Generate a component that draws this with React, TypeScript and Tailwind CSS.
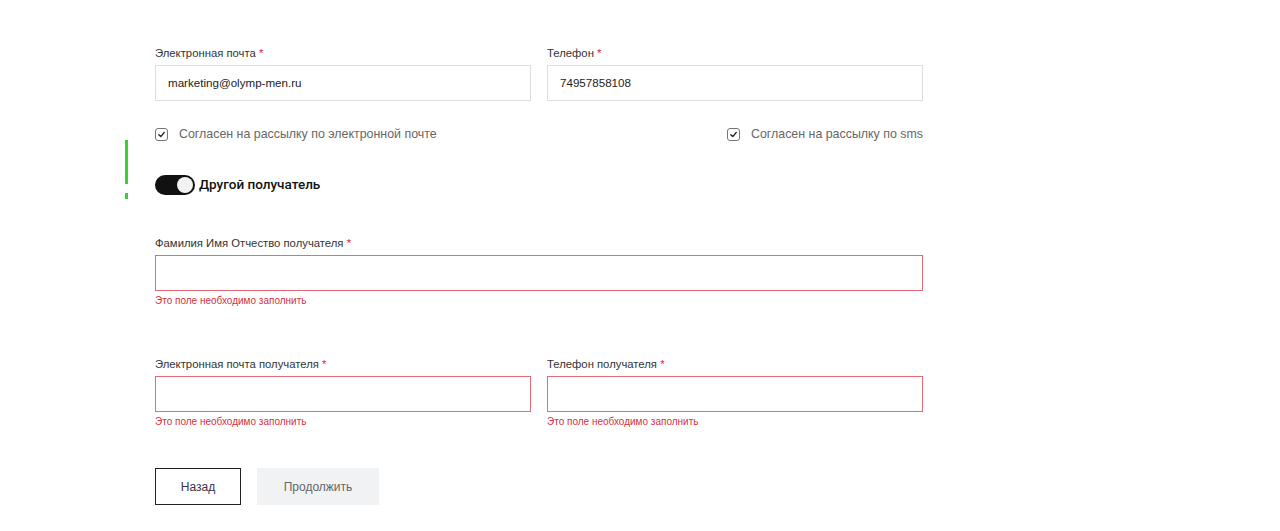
import React from "react";

const font = { fontFamily: '"Liberation Sans", Arial, sans-serif' };

function Label({ children }: { children: React.ReactNode }) {
  return (
    <div className="h-[14px] text-[11.3px] leading-[14px] text-[#333] mb-[5px]">
      {children} <span className="text-[#e3262f]">*</span>
    </div>
  );
}

function Check({ label }: { label: string }) {
  return (
    <label className="flex items-center gap-[11px] text-[12.4px] text-[#666]">
      <span className="w-[13px] h-[13px] border border-[#777] rounded-[3px] flex items-center justify-center">
        <svg width="9" height="9" viewBox="0 0 10 10">
          <path d="M2 5.2 L4.2 7.3 L8 2.8" fill="none" stroke="#222" strokeWidth="1.5" strokeLinecap="round" strokeLinejoin="round" />
        </svg>
      </span>
      {label}
    </label>
  );
}

function ErrInput() {
  return (
    <>
      <div className="h-[36px] border border-[#e56b76] bg-white" />
      <div className="mt-[4px] h-[12px] text-[10px] leading-[12px] text-[#d8303e]">Это поле необходимо заполнить</div>
    </>
  );
}

export default function App() {
  return (
    <div className="relative w-[1280px] h-[531px] bg-white overflow-hidden" style={font}>
      <div className="absolute left-[125px] top-[140px] w-[3px] h-[44px] bg-[#3ad12a]" />
      <div className="absolute left-[125px] top-[193px] w-[3px] h-[6px] bg-[#3ad12a]" />
      <div className="ml-[155px] w-[768px] pt-[46px]">
        <div className="grid grid-cols-2 gap-x-[16px]">
          <div>
            <Label>Электронная почта</Label>
            <div className="h-[36px] border border-[#dedede] flex items-center px-[12px] text-[11.6px] text-[#222]">
              marketing@olymp-men.ru
            </div>
          </div>
          <div>
            <Label>Телефон</Label>
            <div className="h-[36px] border border-[#dedede] flex items-center px-[12px] text-[11.6px] text-[#222]">
              74957858108
            </div>
          </div>
        </div>
        <div className="mt-[26px] h-[14px] flex items-center justify-between">
          <Check label="Согласен на рассылку по электронной почте" />
          <Check label="Согласен на рассылку по sms" />
        </div>
        <div className="mt-[33px] h-[21px] flex items-center gap-[4px]">
          <div className="w-[40px] h-[20px] rounded-full bg-[#111] relative">
            <div className="absolute right-[2px] top-[2px] w-[16px] h-[16px] rounded-full bg-[#f2f2f2]" />
          </div>
          <span
            className="text-[13.5px] leading-[21px] font-medium text-[#111]"
            style={{ fontFamily: 'Roboto, "Liberation Sans", sans-serif' }}
          >
            Другой получатель
          </span>
        </div>
        <div className="mt-[41px]">
          <Label>Фамилия Имя Отчество получателя</Label>
          <ErrInput />
        </div>
        <div className="mt-[50px] grid grid-cols-2 gap-x-[16px]">
          <div>
            <Label>Электронная почта получателя</Label>
            <ErrInput />
          </div>
          <div>
            <Label>Телефон получателя</Label>
            <ErrInput />
          </div>
        </div>
        <div className="mt-[40px] flex gap-[16px]">
          <button className="w-[86px] h-[37px] border border-[#222] text-[12px] text-[#3a3050] bg-white">Назад</button>
          <button className="w-[122px] h-[37px] bg-[#f1f2f4] text-[12px] text-[#666]">Продолжить</button>
        </div>
      </div>
    </div>
  );
}
